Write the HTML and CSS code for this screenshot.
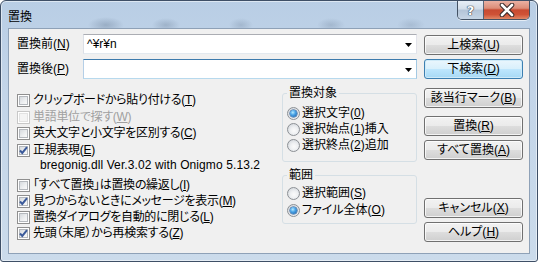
FILE: index.html
```html
<!DOCTYPE html>
<html lang="ja">
<head>
<meta charset="utf-8">
<title>置換</title>
<link rel="stylesheet" href="styles.css">
</head>
<body>
<div class="window">
  <div class="titlebar">
    <div class="title">置換</div>
    <div class="caption">
      <div class="cap help"><span class="q">?</span></div>
      <div class="cap close">
        <svg width="16" height="14" viewBox="0 0 16 14"><path d="M3 2 L13 12 M13 2 L3 12" stroke="#3a2a2a" stroke-width="4.6" stroke-linecap="round"/><path d="M3 2 L13 12 M13 2 L3 12" stroke="#ffffff" stroke-width="2.6" stroke-linecap="round"/></svg>
      </div>
    </div>
  </div>
  <div class="client">
    <div class="search-row">
      <span class="lbl">置換前(<u>N</u>)</span>
      <div class="combo"><span class="val">^¥r¥n</span><svg class="arrow" width="7" height="4" viewBox="0 0 7 4"><path d="M0 0 H7 L3.5 4 Z" fill="#000"/></svg></div>
      <div class="btn top">上検索(<u>U</u>)</div>
    </div>
    <div class="search-row">
      <span class="lbl">置換後(<u>P</u>)</span>
      <div class="combo focus"><span class="val"></span><svg class="arrow" width="7" height="4" viewBox="0 0 7 4"><path d="M0 0 H7 L3.5 4 Z" fill="#000"/></svg></div>
      <div class="btn default">下検索(<u>D</u>)</div>
    </div>
    <div class="lower">
      <div class="checks">
        <div class="chk h17"><span class="cb"></span><span class="txt">クリップボードから貼り付ける(<u>T</u>)</span></div>
        <div class="chk h16 disabled"><span class="cb"></span><span class="txt">単語単位で探す(<u>W</u>)</span></div>
        <div class="chk h17"><span class="cb"></span><span class="txt">英大文字と小文字を区別する(<u>C</u>)</span></div>
        <div class="chk h12"><span class="cb on"><svg width="11" height="11" viewBox="0 0 11 11"><path d="M2 5.5 L4.3 8 L9 2.2" fill="none" stroke="#3b5a9a" stroke-width="2"/></svg></span><span class="txt">正規表現(<u>E</u>)</span></div>
        <div class="note">bregonig.dll Ver.3.02 with Onigmo 5.13.2</div>
        <div class="chk h16"><span class="cb"></span><span class="txt">「すべて置換」は置換の繰返し(<u>I</u>)</span></div>
        <div class="chk h16"><span class="cb on"><svg width="11" height="11" viewBox="0 0 11 11"><path d="M2 5.5 L4.3 8 L9 2.2" fill="none" stroke="#3b5a9a" stroke-width="2"/></svg></span><span class="txt">見つからないときにメッセージを表示(<u>M</u>)</span></div>
        <div class="chk h16"><span class="cb"></span><span class="txt">置換ダイアログを自動的に閉じる(<u>L</u>)</span></div>
        <div class="chk h16"><span class="cb on"><svg width="11" height="11" viewBox="0 0 11 11"><path d="M2 5.5 L4.3 8 L9 2.2" fill="none" stroke="#3b5a9a" stroke-width="2"/></svg></span><span class="txt">先頭（末尾）から再検索する(<u>Z</u>)</span></div>
      </div>
      <div class="groups">
        <fieldset class="grp g1">
          <legend>置換対象</legend>
          <div class="rad"><span class="rb on"></span><span class="txt">選択文字(<u>0</u>)</span></div>
          <div class="rad"><span class="rb"></span><span class="txt">選択始点(<u>1</u>)挿入</span></div>
          <div class="rad"><span class="rb"></span><span class="txt">選択終点(<u>2</u>)追加</span></div>
        </fieldset>
        <fieldset class="grp g2">
          <legend>範囲</legend>
          <div class="rad"><span class="rb"></span><span class="txt">選択範囲(<u>S</u>)</span></div>
          <div class="rad"><span class="rb on"></span><span class="txt">ファイル全体(<u>O</u>)</span></div>
        </fieldset>
      </div>
      <div class="btncol">
        <div class="btn b-mark">該当行マーク(<u>B</u>)</div>
        <div class="btn b-rep">置換(<u>R</u>)</div>
        <div class="btn b-all">すべて置換(<u>A</u>)</div>
        <div class="btn b-cancel">キャンセル(<u>X</u>)</div>
        <div class="btn b-help">ヘルプ(<u>H</u>)</div>
      </div>
    </div>
  </div>
</div>
</body>
</html>
```

FILE: styles.css
```css
* { box-sizing: border-box; }
html, body { margin: 0; padding: 0; background: #ffffff; }
body {
  width: 538px;
  height: 262px;
  overflow: hidden;
  font-family: "Liberation Sans", "Noto Sans CJK JP", sans-serif;
  font-size: 12px;
  font-feature-settings: "palt" 1;
  color: #000;
}
u { text-decoration: underline; text-underline-offset: 1px; text-decoration-thickness: 1px; }

.window {
  width: 538px;
  height: 262px;
  border: 1px solid #3e4f66;
  border-radius: 6px 6px 3px 3px;
  background:
    radial-gradient(ellipse 18px 8px at 105px 24px, rgba(90,110,135,0.35), rgba(90,110,135,0) 100%),
    radial-gradient(ellipse 14px 7px at 165px 24px, rgba(90,110,135,0.3), rgba(90,110,135,0) 100%),
    radial-gradient(ellipse 12px 7px at 240px 24px, rgba(90,110,135,0.25), rgba(90,110,135,0) 100%),
    radial-gradient(ellipse 14px 7px at 330px 24px, rgba(90,110,135,0.25), rgba(90,110,135,0) 100%),
    radial-gradient(ellipse 14px 7px at 410px 24px, rgba(90,110,135,0.2), rgba(90,110,135,0) 100%),
    linear-gradient(180deg, #b9cee5 0%, #c3d5e9 35%, #cbdbeb 100%);
  box-shadow: inset 0 0 0 1px rgba(255,255,255,0.5);
  display: flex;
  flex-direction: column;
}

.titlebar {
  height: 27px;
  flex: none;
  display: flex;
  justify-content: space-between;
  align-items: flex-start;
}
.title {
  padding: 8px 0 0 7px;
  line-height: 14px;
  font-family: "Noto Sans CJK JP", sans-serif;
  font-feature-settings: normal;
}
.caption {
  display: flex;
  margin-right: 7px;
  height: 19px;
  border: 1px solid rgba(38, 50, 68, 0.8);
  border-top: none;
  border-radius: 0 0 5px 5px;
  overflow: hidden;
  box-shadow: 0 1px 0 rgba(255,255,255,0.6);
}
.cap {
  height: 100%;
  display: flex;
  align-items: center;
  justify-content: center;
}
.help {
  width: 26px;
  background: linear-gradient(180deg, #e7eef6 0%, #d2dde9 45%, #b3c4d7 50%, #c6d5e5 100%);
  border-right: 1px solid rgba(38, 50, 68, 0.7);
}
.q {
  font-family: "DejaVu Sans", sans-serif;
  font-weight: bold;
  font-size: 13px;
  line-height: 13px;
  color: #fff;
  text-shadow: 0 0 1px #2c3a4c, 0 0 1px #2c3a4c, 0 0 1px #2c3a4c;
}
.close {
  width: 45px;
  background: linear-gradient(180deg, #eab1a3 0%, #dc8d78 40%, #c84a31 50%, #cf5236 75%, #e08766 100%);
}

.client {
  margin: 0 7px;
  height: 226px;
  background: #f0f0f0;
  border: 1px solid #8ea1b7;
  padding: 5px 6px 0 8px;
}

.search-row {
  display: flex;
  align-items: flex-start;
  height: 20px;
}
.search-row + .search-row { margin-top: 5px; }
.lbl {
  width: 66px;
  line-height: 20px;
}
.combo {
  width: 334px;
  height: 20px;
  margin-right: 7px;
  background: #fff;
  border: 1px solid;
  border-color: #abadb3 #e2e3ea #e3e9ef #dbdfe6;
  display: flex;
  align-items: center;
  justify-content: space-between;
  padding: 0 4px 0 3px;
}
.combo.focus { border-color: #3d7bad #a4c9e3 #b7d9ed #b5cfe7; }
.val { line-height: 16px; }
.arrow { flex: none; margin-top: 1px; }

.btn {
  width: 99px;
  height: 20px;
  border: 1px solid #707070;
  border-radius: 3px;
  background: linear-gradient(180deg, #f2f2f2 0%, #ebebeb 48%, #dddddd 52%, #cfcfcf 100%);
  box-shadow: inset 0 0 0 1px rgba(255,255,255,0.75);
  text-align: center;
  line-height: 18px;
}
.btn.top { margin-top: 1px; }
.btn.default {
  border-color: #3c7fb1;
  background: linear-gradient(180deg, #eaf6fd 0%, #d9f0fc 48%, #bee6fd 52%, #a7d9f5 100%);
  box-shadow: inset 0 0 0 1px #cfeaf8;
}

.lower {
  display: grid;
  grid-template-columns: 265px 135px 99px;
  margin-top: 8px;
}

.checks {
  padding-top: 7px;
  display: flex;
  flex-direction: column;
}
.chk {
  display: flex;
  align-items: flex-start;
}
.chk.h17 { height: 17px; }
.chk.h16 { height: 16px; }
.chk.h12 { height: 12px; }
.chk .txt { line-height: 13px; margin-left: 3px; white-space: nowrap; letter-spacing: -0.3px; }
.chk.disabled .txt { color: #a0a0a0; }

.cb {
  flex: none;
  position: relative;
  width: 13px;
  height: 13px;
  border: 1px solid #8f8f8f;
  background: #fff;
}
.cb::before {
  content: "";
  position: absolute;
  inset: 1px;
  border: 1px solid #b4b8bd;
  background: linear-gradient(135deg, #d6dade 0%, #eceef0 55%, #fafafa 100%);
}
.cb svg { position: absolute; left: 0; top: 0; }
.disabled .cb { border-color: #c8c8c8; }
.disabled .cb::before { border-color: #e2e2e2; background: #f4f4f4; }

.note {
  height: 23px;
  padding: 3px 0 0 23px;
  line-height: 13px;
  white-space: nowrap;
  letter-spacing: 0.1px;
}

.groups {
  display: flex;
  flex-direction: column;
}
.grp {
  margin: 0;
  width: 135px;
  border: 1px solid #d5dfe5;
  border-radius: 3px;
  padding: 6px 4px 8px 4px;
  min-width: 0;
}
.grp legend {
  padding: 0 2px;
  line-height: 12px;
}
.g1 { height: 75px; }
.g2 { height: 55px; margin-top: 7px; padding-top: 4px; }
.rad {
  display: flex;
  align-items: center;
  height: 16px;
}
.g2 .rad { height: 17px; }
.rad .txt { margin-left: 2px; line-height: 13px; white-space: nowrap; }

.rb {
  flex: none;
  position: relative;
  width: 13px;
  height: 13px;
  border-radius: 50%;
  border: 1px solid #8c9095;
  background: radial-gradient(circle at 55% 60%, #fbfbfb 0%, #eef0f2 40%, #d2d6db 85%);
}
.rb.on::after {
  content: "";
  position: absolute;
  left: 2px;
  top: 2px;
  width: 7px;
  height: 7px;
  border-radius: 50%;
  background: radial-gradient(circle at 40% 35%, #b8ecff 0%, #4aa3e6 40%, #16569f 100%);
  box-shadow: 0 0 0 0.5px #1b4c86;
}

.btncol {
  margin-left: 7px;
  display: flex;
  flex-direction: column;
}
.b-mark { margin-top: 1px; }
.b-rep { margin-top: 8px; }
.b-all { margin-top: 4px; }
.b-cancel { margin-top: 38px; }
.b-help { margin-top: 4px; }
```
